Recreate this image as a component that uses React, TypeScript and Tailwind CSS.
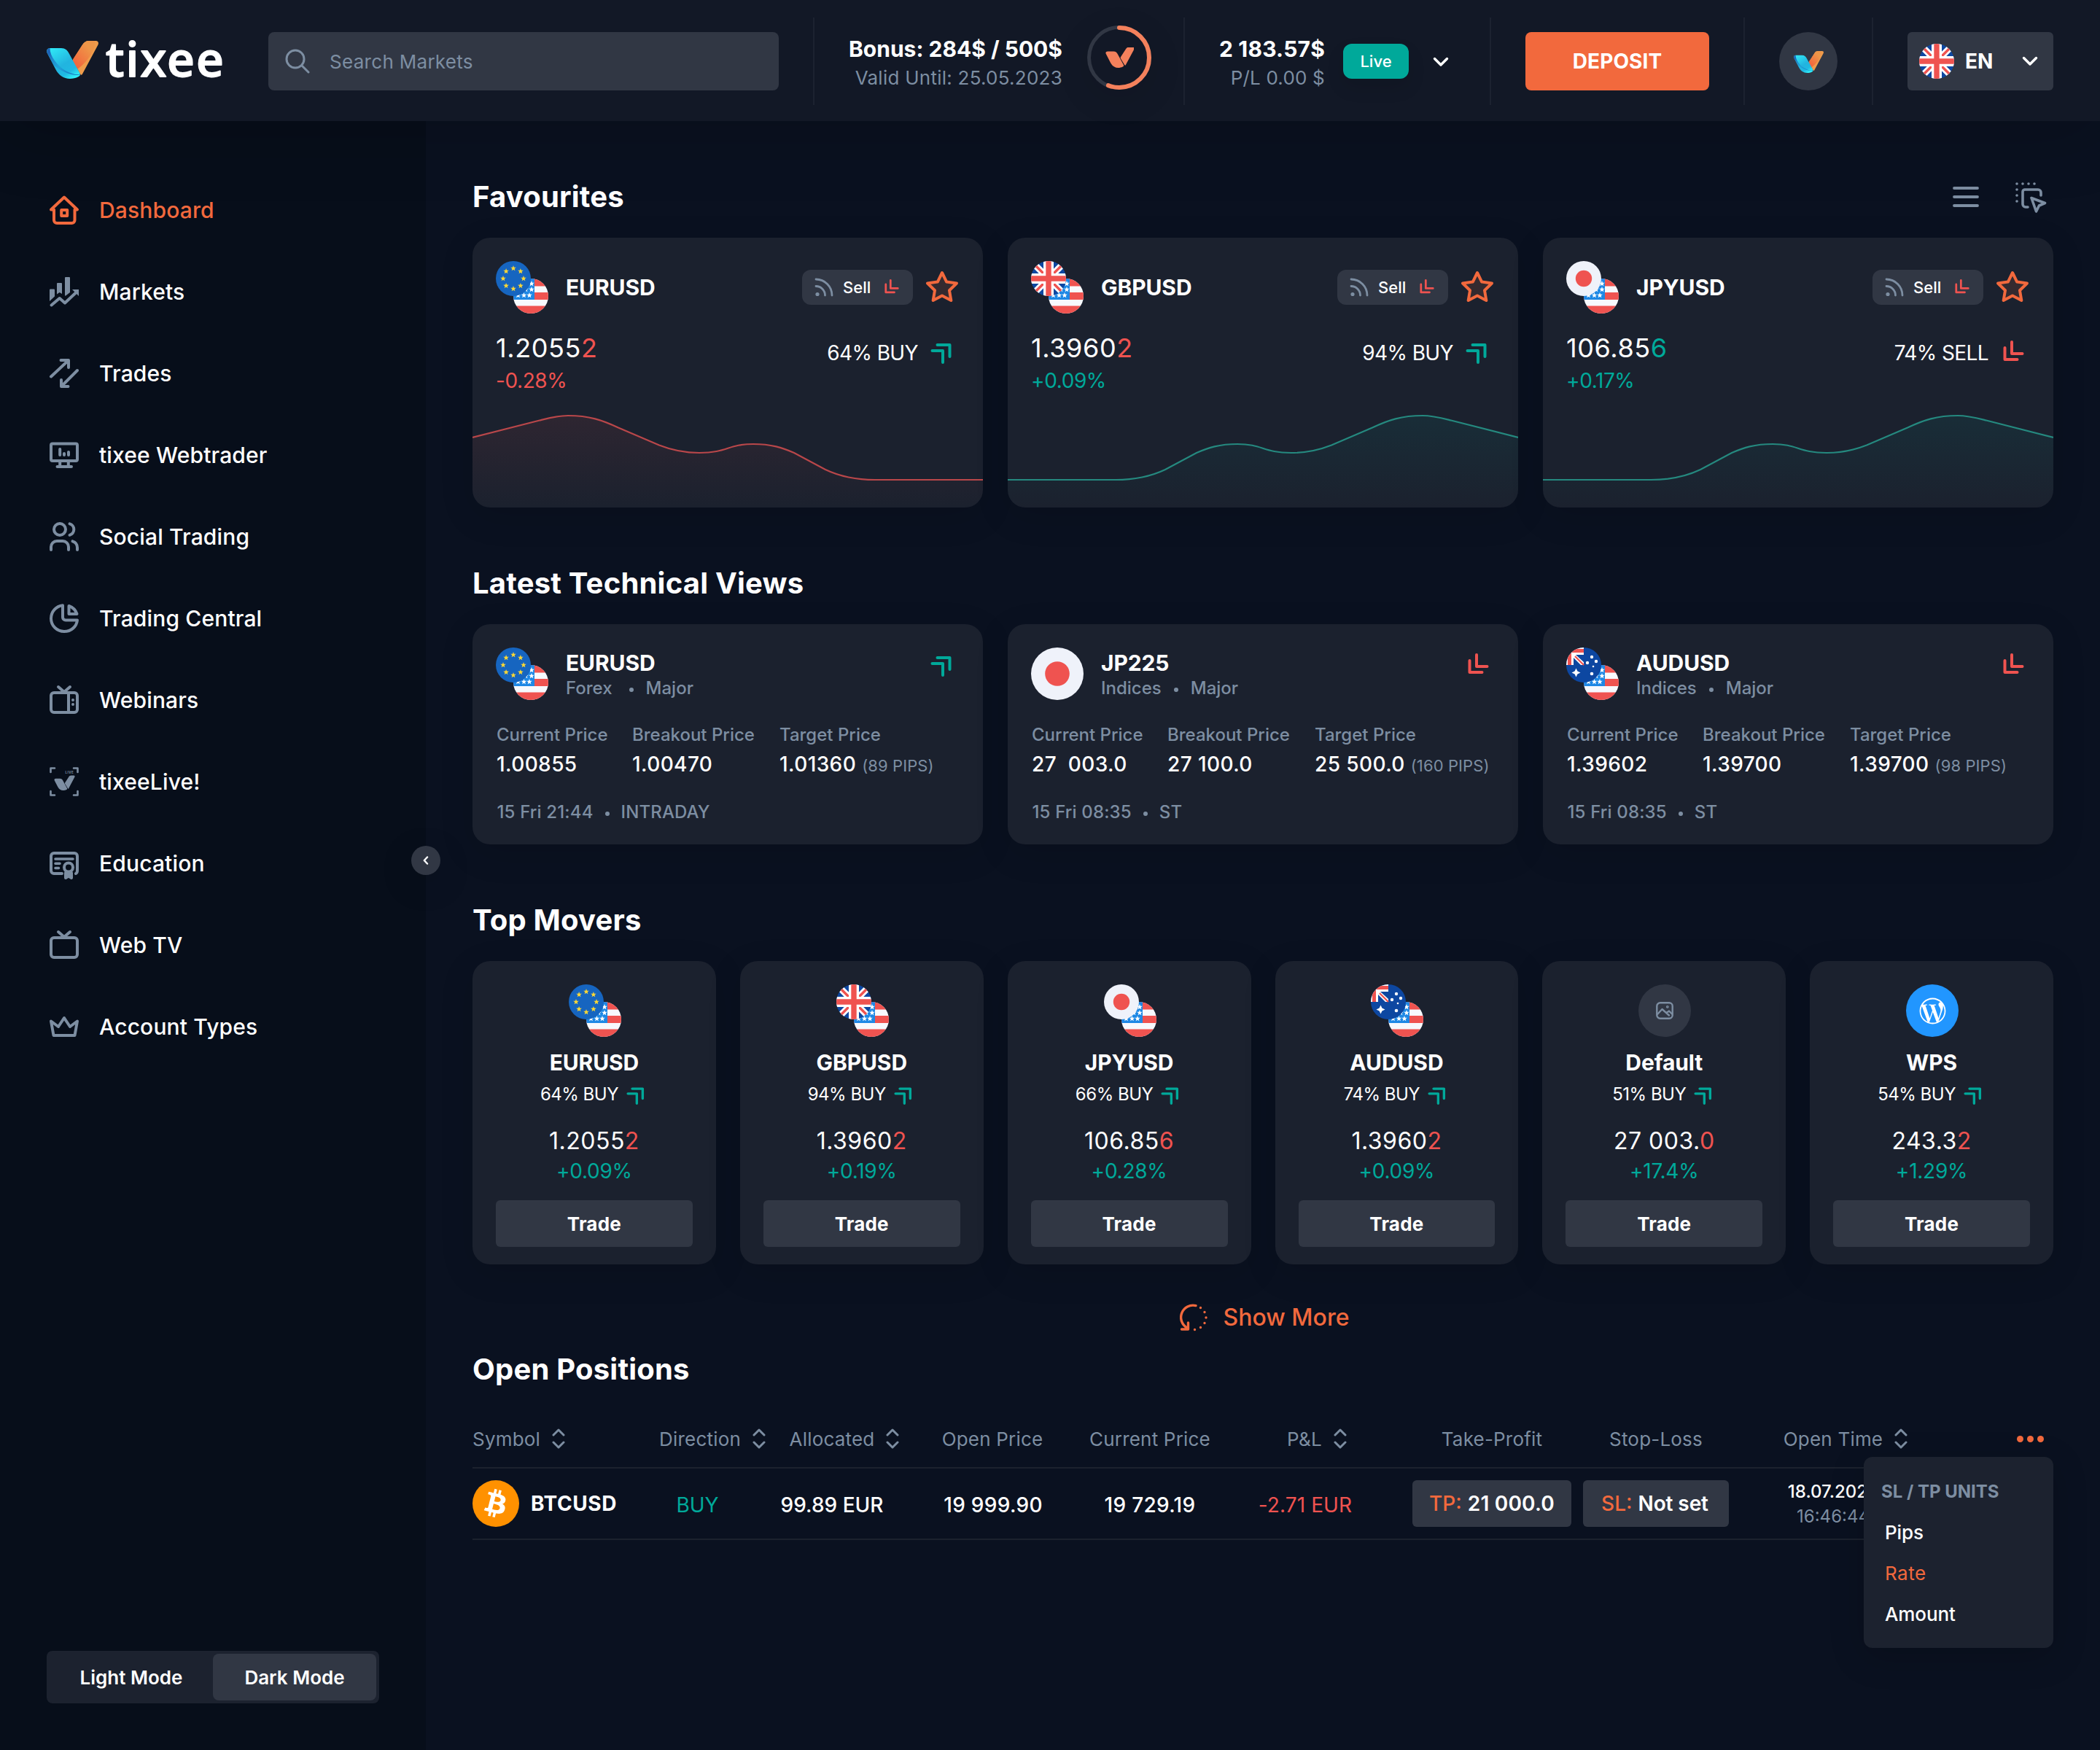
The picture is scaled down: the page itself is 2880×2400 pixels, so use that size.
import React from 'react';
import { FaBitcoin, FaWordpressSimple } from 'react-icons/fa';

/* ---------- flags ---------- */

function starPoints(cx: number, cy: number, r: number, spikes = 5, ratio = 0.42) {
  const pts: string[] = [];
  for (let i = 0; i < spikes * 2; i++) {
    const a = (Math.PI / spikes) * i - Math.PI / 2;
    const rad = i % 2 === 0 ? r : r * ratio;
    pts.push(`${(cx + rad * Math.cos(a)).toFixed(2)},${(cy + rad * Math.sin(a)).toFixed(2)}`);
  }
  return pts.join(' ');
}

type FlagCode = 'eu' | 'us' | 'gb' | 'jp' | 'au';

function FlagArt({ code }: { code: FlagCode }) {
  if (code === 'eu') {
    return (
      <>
        <rect width="48" height="48" fill="#1665C0" />
        {[0, 1, 2, 3, 4, 5, 6, 7].map((i) => (
          <polygon
            key={i}
            points={starPoints(24 + 14 * Math.sin((i * Math.PI) / 4), 24 - 14 * Math.cos((i * Math.PI) / 4), 4)}
            fill="#FDD835"
          />
        ))}
      </>
    );
  }
  if (code === 'us') {
    return (
      <>
        <rect width="48" height="48" fill="#F7F9FD" />
        <rect width="48" height="10.5" fill="#EF5350" />
        <rect y="19" width="48" height="10" fill="#EF5350" />
        <rect y="37.5" width="48" height="10.5" fill="#EF5350" />
        <rect width="29" height="29" fill="#1E88E5" />
        {[
          [25, 7], [17, 7], [9, 7], [25, 15], [17, 15], [9, 15], [22, 23], [14.5, 23], [6.5, 23],
        ].map(([x, y]) => (
          <polygon key={`${x}-${y}`} points={starPoints(x, y, 4)} fill="#fff" />
        ))}
      </>
    );
  }
  if (code === 'gb') {
    return (
      <>
        <rect width="48" height="48" fill="#0D47A1" />
        <path d="M0 0L48 48M48 0L0 48" stroke="#fff" strokeWidth="9" />
        <path d="M0 0L48 48M48 0L0 48" stroke="#EF5350" strokeWidth="3.4" />
        <path d="M24 0V48M0 24H48" stroke="#fff" strokeWidth="14" />
        <path d="M24 0V48M0 24H48" stroke="#EF5350" strokeWidth="7.4" />
      </>
    );
  }
  if (code === 'jp') {
    return (
      <>
        <rect width="48" height="48" fill="#EFF2FA" />
        <circle cx="24" cy="24" r="11.2" fill="#EF5350" />
      </>
    );
  }
  return (
    <>
      <rect width="48" height="48" fill="#0D47A1" />
      <rect width="24" height="24" fill="#fff" />
      <path d="M0 4.5H24M4.500 0V24" stroke="#EF5350" strokeWidth="5" />
      <path d="M13 10H24V20Z M10 14L20 24H10Z" fill="#0D47A1" />
      <path d="M12 12L24 24" stroke="#EF5350" strokeWidth="2.2" />
      <polygon points={starPoints(13.5, 34.5, 6, 4, 0.45)} fill="#fff" />
      <circle cx="35" cy="13" r="2.2" fill="#fff" />
      <circle cx="29" cy="21" r="2.2" fill="#fff" />
      <circle cx="41" cy="19" r="2.2" fill="#fff" />
      <circle cx="37" cy="26" r="1.3" fill="#fff" />
      <circle cx="35" cy="36" r="2.3" fill="#fff" />
    </>
  );
}

function Flag({ code, className }: { code: FlagCode; className: string }) {
  return (
    <svg viewBox="0 0 48 48" className={`rounded-full ${className}`}>
      <FlagArt code={code} />
    </svg>
  );
}

function PairFlags({ base }: { base: FlagCode }) {
  return (
    <div className="relative size-[72px] shrink-0">
      <Flag code="us" className="absolute right-0 bottom-0 size-12" />
      <Flag code={base} className="absolute top-0 left-0 size-12" />
    </div>
  );
}

/* ---------- brand mark ---------- */

const LEFT_LEAF =
  'M.4 16C-.8 12 1.6 10 5 10H20C25.500 10 28.500 13 30.500 17L45 43.500C46.500 46.500 46 48 43.500 49.200C40 51 36 52 32 52C23 52 16.500 47 12.500 39.500Z';
const RIGHT_LEAF = 'M49 5.500C51 2 54 0 58 0H67.500C70.800 0 71.800 2.800 70.300 5.800L49 45.500C48 47.300 47 47.300 46 45.500L36.500 30C35.300 28 35.300 26.800 36.400 25Z';

function BrandMark({ id, className }: { id: string; className: string }) {
  return (
    <svg viewBox="0 0 71 52" className={className}>
      <defs>
        <linearGradient id={`${id}-b`} x1="8" y1="10" x2="34" y2="52" gradientUnits="userSpaceOnUse">
          <stop offset="0" stopColor="#2FE6F5" />
          <stop offset="0.55" stopColor="#22B4DF" />
          <stop offset="0.8" stopColor="#1FB9E2" />
          <stop offset="1" stopColor="#2FEDF8" />
        </linearGradient>
        <linearGradient id={`${id}-d`} x1="6" y1="14" x2="40" y2="46" gradientUnits="userSpaceOnUse">
          <stop offset="0" stopColor="#1C63B7" />
          <stop offset="0.5" stopColor="#1F9AD6" stopOpacity="0.6" />
          <stop offset="1" stopColor="#1768B8" />
        </linearGradient>
        <linearGradient id={`${id}-o`} x1="40" y1="30" x2="62" y2="10" gradientUnits="userSpaceOnUse">
          <stop offset="0" stopColor="#F2693D" />
          <stop offset="0.9" stopColor="#EE9648" />
        </linearGradient>
      </defs>
      <path d={RIGHT_LEAF} fill="#EF9C4B" />
      <path d="M49 5.500C51 2 54 0 58 0H66C68 8 60 26 42 39L36.500 30C35.300 28 35.300 26.800 36.400 25Z" fill={`url(#${id}-o)`} />
      <path d={LEFT_LEAF} fill={`url(#${id}-b)`} />
      <path d="M.4 16C-.6 12 2 10 4.500 10C4 20 14 34 26 41C33 45 40 47 46 46C45 42 38 31 34 23L45 43.500C46.500 46.500 46 47 43 47C30 47 18 40 10 34Z" fill={`url(#${id}-d)`} />
    </svg>
  );
}

function MonoMark({ className }: { className: string }) {
  return (
    <svg viewBox="0 0 71 52" className={className} fill="currentColor">
      <path d={LEFT_LEAF} />
      <path d={RIGHT_LEAF} transform="translate(2 -1)" />
    </svg>
  );
}

/* ---------- small icons ---------- */

function TrendIcon({ down = false, className }: { down?: boolean; className: string }) {
  return (
    <svg
      viewBox="0 0 32 32"
      fill="none"
      stroke="currentColor"
      strokeWidth="4"
      strokeLinecap="round"
      strokeLinejoin="round"
      className={`shrink-0 ${down ? 'rotate-180 text-[#EF5350]' : 'text-[#00A99A]'} ${className}`}
    >
      <path d="M9.500 6H26.500V22M2.500 14H17V30" />
    </svg>
  );
}

function ChevronDown() {
  return (
    <svg viewBox="0 0 22 14" className="h-[14px] w-[22px] shrink-0" fill="none" stroke="#fff" strokeWidth="3.4" strokeLinecap="round" strokeLinejoin="round">
      <path d="M2.500 2.500L11 11L19.500 2.500" />
    </svg>
  );
}

function SortIcon() {
  return (
    <svg viewBox="0 0 18 28" className="-mr-[34px] ml-4 h-7 w-[18px] shrink-0" fill="none" stroke="currentColor" strokeWidth="3" strokeLinecap="round" strokeLinejoin="round">
      <path d="M2 9L9 2L16 9M2 19L9 26L16 19" />
    </svg>
  );
}

function StarIcon() {
  return (
    <svg viewBox="0 0 48 48" className="size-12 shrink-0">
      <polygon points={starPoints(24, 25, 21, 5, 0.5)} fill="#F2693D" fillOpacity="0.12" stroke="#F2693D" strokeWidth="4" strokeLinejoin="round" />
    </svg>
  );
}

function NavIcon({ name }: { name: string }) {
  const paths: Record<string, React.ReactNode> = {
    Dashboard: (
      <>
        <path d="M2 19.500L20 2.500L38 19.500H34.500V34A4 4 0 0 1 30.500 38H10A4 4 0 0 1 6 34V19.500Z" />
        <rect x="16.200" y="20" width="8" height="8" />
      </>
    ),
    Markets: (
      <g fill="currentColor" stroke="none">
        <path d="M0 17.500Q0 16.500 1 16.500H6Q7 16.500 7 17.500V26.500L0 33Z" />
        <path d="M10 9Q10 8 11 8H16Q17 8 17 9V23L13.700 21L10 23.500Z" />
        <path d="M21 1Q21 0 22 0H27Q28 0 28 1V21L21.500 26Q21 25 21 24Z" />
        <path d="M2.500 38.500L13.700 29L21 35.500L36.500 21" fill="none" stroke="currentColor" strokeWidth="4" />
        <path d="M31 17H40V26Z" />
      </g>
    ),
    Trades: <path d="M2 24.500L25 3M15.500 2H26V12M38 16L16.500 37.500M16 29V38H25.500" />,
    'tixee Webtrader': (
      <>
        <rect x="2" y="4.500" width="36" height="23.500" rx="2" />
        <path d="M14.200 29V35M25.800 29V35M10.500 36H30" />
        <path d="M14.200 12V20M20 18V20M26 16V20" />
      </>
    ),
    'Social Trading': (
      <>
        <circle cx="14" cy="10" r="8" />
        <path d="M2 38V34A8 8 0 0 1 10 26H18A8 8 0 0 1 26 34V38M27.500 2.400A8 8 0 0 1 27.500 17.800M31.500 26.400Q38 28.500 38 35V38" />
      </>
    ),
    'Trading Central': (
      <path d="M18 2.200C8.800 3.200 2 11 2 20.200C2 30 10 38 20 38C29.500 38 37 31.500 38 22.500H22A4 4 0 0 1 18 18.500ZM26.500 3C31.500 4.800 35.800 9 37.500 14H26.500Z" />
    ),
    Webinars: (
      <>
        <rect x="2" y="10" width="36" height="27" rx="4" />
        <path d="M12 2L20 9L28 2M26 10V37" />
        <path d="M32 20V20.010M32 26V26.010" />
      </>
    ),
    'tixeeLive!': (
      <>
        <path d="M7 1.500H1.500V7M33 1.500H38.500V7M7 38.500H1.500V33M33 38.500H38.500V33" strokeWidth="2.6" />
        <g transform="translate(6.500 12) scale(.385)" fill="currentColor" stroke="none">
          <path d={LEFT_LEAF} />
          <path d={RIGHT_LEAF} transform="translate(2 -1)" />
        </g>
        <text x="21.500" y="8.600" fontSize="4.400" fontWeight="700" letterSpacing="0.5" fill="currentColor" stroke="none">
          LIVE
        </text>
      </>
    ),
    Education: (
      <>
        <path d="M17 34H6A4 4 0 0 1 2 30V10A4 4 0 0 1 6 6H34A4 4 0 0 1 38 10V30Q38 33 36 34" />
        <path d="M8 14H32M8 20.300H14M8 26.500H12.500" strokeWidth="3.6" />
        <circle cx="26" cy="25.500" r="6" />
        <path d="M22 33V40L26 37.500L30 40V33M22 34.500H30" />
      </>
    ),
    'Web TV': (
      <>
        <rect x="2" y="10" width="36" height="27" rx="4" />
        <path d="M12 2L20 9L28 2" />
      </>
    ),
    'Account Types': <path d="M2 12.500L12 20L20 8L28 20L38 12.500L34.500 32H5.500Z" />,
  };
  return (
    <svg viewBox="0 0 40 40" className="size-10 shrink-0 overflow-visible" fill="none" stroke="currentColor" strokeWidth="4" strokeLinecap="round" strokeLinejoin="round">
      {paths[name]}
    </svg>
  );
}

/* ---------- header ---------- */

function Header() {
  return (
    <header className="relative z-20 flex h-[166px] shrink-0 items-start bg-[#121826] pt-6 pr-16 pl-16 shadow-[0_12px_100px_rgba(0,0,0,0.18)]">
      <div className="mt-8 flex w-[304px] shrink-0 items-start">
        <BrandMark id="logo" className="h-[52px] w-[71px]" />
        <svg viewBox="0 0 170 60" className="-mt-1 ml-2 h-[60px] w-[170px] overflow-visible">
          <text x="2" y="52.500" fill="#fff" stroke="#fff" strokeWidth="1.800" strokeLinejoin="round" textLength="162" className="font-['Noto_Sans'] text-[66px] font-medium">
            tixee
          </text>
        </svg>
      </div>
      <div className="mt-5 flex h-20 w-[700px] shrink-0 items-center rounded-lg bg-[#313744] pl-[23px]">
        <svg viewBox="0 0 34 34" className="size-[34px]" fill="none" stroke="#7D8EA2" strokeWidth="3" strokeLinecap="round">
          <circle cx="14" cy="14" r="12" />
          <path d="M23 23L32 32" />
        </svg>
        <span className="ml-[27px] text-[26px] tracking-[0.3px] text-[#7D8EA2]">Search Markets</span>
      </div>

      <div className="ml-[47px] flex h-[120px] w-[508px] shrink-0 items-start justify-end border-l-2 border-[#1C2230] pr-[44px]">
        <div className="mt-[23px] text-right leading-10 whitespace-nowrap">
          <div className="text-[30px] font-bold text-white">Bonus: 284$ / 500$</div>
          <div className="text-[26px] tracking-[0.25px] text-[#7D8EA2]">Valid Until: 25.05.2023</div>
        </div>
        <div className="mt-[11px] ml-[34px] grid size-[88px] place-items-center rounded-full shadow-[0_12px_48px_rgba(0,0,0,0.1)]">
          <svg viewBox="0 0 88 88" className="col-start-1 row-start-1 size-[88px]" fill="none">
            <circle cx="44" cy="44" r="41.500" stroke="#313744" strokeWidth="5" />
            <circle cx="44" cy="44" r="41" stroke="#F4815C" strokeWidth="6" pathLength="100" strokeDasharray="56 100" strokeLinecap="round" transform="rotate(-90 44 44)" />
          </svg>
          <MonoMark className="col-start-1 row-start-1 h-7 w-[39px] text-[#F4815C]" />
        </div>
      </div>

      <div className="flex h-[120px] w-[420px] shrink-0 items-start border-l-2 border-[#1C2230]">
        <div className="mt-[23px] w-[192px] text-right leading-10 whitespace-nowrap">
          <div className="text-[30px] font-bold tracking-[0.2px] text-white">2 183.57$</div>
          <div className="text-[26px] tracking-[0.2px] text-[#7D8EA2]">P/L 0.00 $</div>
        </div>
        <div className="mt-9 ml-[25px] flex h-12 w-[90px] items-center justify-center rounded-xl bg-[#00A99A] text-[22px] font-medium text-white shadow-[0_12px_24px_rgba(0,0,0,0.1)]">
          Live
        </div>
        <div className="mt-[54px] ml-[33px]">
          <ChevronDown />
        </div>
      </div>

      <div className="flex h-[120px] w-[348px] shrink-0 items-start border-l-2 border-[#1C2230] pl-[47px]">
        <button className="mt-5 h-20 w-[252px] rounded-lg bg-[#F2693D] text-[28px] font-bold tracking-[0.1px] text-white">DEPOSIT</button>
      </div>
      <div className="flex h-[120px] w-[176px] shrink-0 items-start border-l-2 border-[#1C2230] pl-[47px]">
        <div className="mt-5 flex size-20 items-center justify-center rounded-full bg-[#313744]">
          <BrandMark id="avatar" className="mt-0.5 h-[30px] w-[41px]" />
        </div>
      </div>
      <div className="flex h-[120px] shrink-0 items-start border-l-2 border-[#1C2230] pl-[47px]">
        <div className="mt-5 flex h-20 w-[200px] items-center rounded-md bg-[#313744] pl-4">
          <Flag code="gb" className="size-12" />
          <span className="ml-[15px] w-[61px] text-[28px] font-bold text-white">EN</span>
          <div className="ml-[17px]">
            <ChevronDown />
          </div>
        </div>
      </div>
    </header>
  );
}

/* ---------- sidebar ---------- */

const NAV = [
  'Dashboard', 'Markets', 'Trades', 'tixee Webtrader', 'Social Trading', 'Trading Central',
  'Webinars', 'tixeeLive!', 'Education', 'Web TV', 'Account Types',
];

function Sidebar() {
  return (
    <aside className="relative z-10 flex w-[584px] shrink-0 flex-col justify-between bg-[#070E1A] pt-[66px] pb-16">
      <nav className="flex flex-col">
        {NAV.map((item, i) => (
          <a key={item} className={`flex h-28 items-center gap-7 pl-[68px] ${i === 0 ? 'text-[#F2693D]' : 'text-[#7D8EA2]'}`}>
            <NavIcon name={item} />
            <span className={`text-[30px] font-medium tracking-[0.15px] ${i === 0 ? 'text-[#F2693D]' : 'text-white'}`}>{item}</span>
          </a>
        ))}
      </nav>
      <div className="ml-16 grid h-[72px] w-[456px] grid-cols-2 rounded-lg bg-[#1C222F] p-1 text-[26px] font-semibold text-white">
        <span className="flex items-center justify-center">Light Mode</span>
        <span className="flex items-center justify-center rounded-lg bg-[#313744]">Dark Mode</span>
      </div>
      <button className="absolute top-[994px] -right-5 flex size-10 items-center justify-center rounded-full bg-[#313744] shadow-[0_12px_48px_rgba(0,0,0,0.15)]">
        <svg viewBox="0 0 8 12" className="h-3 w-2" fill="none" stroke="#fff" strokeWidth="2.400" strokeLinecap="round" strokeLinejoin="round">
          <path d="M6 1.500L1.800 6L6 10.500" />
        </svg>
      </button>
    </aside>
  );
}

/* ---------- favourites ---------- */

const CARD = 'rounded-3xl bg-[#1B212E] shadow-[0_12px_48px_rgba(0,0,0,0.12)]';
const CURVE = 'M0 32L92 8.500C106 5 117 2 131 2C160 2 178 8 200 18.500L256 42.500C275 50 290 53 311 53C350 53 350 41 385 41C410 41 425 46 441 53L484 76C505 86 525 90 552 90H700';

function Chart({ up }: { up: boolean }) {
  const color = up ? '#00A99A' : '#EF5350';
  const id = up ? 'area-up' : 'area-down';
  return (
    <svg viewBox="0 0 700 128" className={`mt-auto h-32 w-full ${up ? '-scale-x-100' : ''}`} fill="none">
      <defs>
        <linearGradient id={id} x1="0" y1="0" x2="0" y2="1">
          <stop offset="0" stopColor={color} stopOpacity="0.09" />
          <stop offset="1" stopColor={color} stopOpacity="0" />
        </linearGradient>
      </defs>
      <path d={`${CURVE}V128H0Z`} fill={`url(#${id})`} />
      <path d={CURVE} stroke={up ? '#25897F' : '#B9474A'} strokeWidth="2.200" />
    </svg>
  );
}

const FAVOURITES = [
  { base: 'eu', name: 'EURUSD', price: '1.2055', last: '2', lastUp: false, pct: '-0.28%', mood: '64% BUY', sell: false, up: false },
  { base: 'gb', name: 'GBPUSD', price: '1.3960', last: '2', lastUp: false, pct: '+0.09%', mood: '94% BUY', sell: false, up: true },
  { base: 'jp', name: 'JPYUSD', price: '106.85', last: '6', lastUp: true, pct: '+0.17%', mood: '74% SELL', sell: true, up: true },
] as const;

function Favourites() {
  return (
    <section>
      <div className="flex h-12 items-center justify-between pr-2">
        <Title>Favourites</Title>
        <div className="flex items-center gap-[48px] text-[#7D8EA2]">
          <svg viewBox="0 0 40 28" className="h-7 w-10" stroke="currentColor" strokeWidth="3.800" strokeLinecap="round">
            <path d="M4 2H36M4 14H36M4 26H36" />
          </svg>
          <svg viewBox="0 0 44 42" className="mt-0.5 h-[42px] w-11" fill="none" stroke="currentColor" strokeWidth="3.600" strokeLinecap="round" strokeLinejoin="round">
            <path d="M2 2V2.010M10 2V2.010M18 2V2.010M26 2V2.010M2 10V10.010M2 18V18.010M2 26V26.010" />
            <path d="M17 34H14A4 4 0 0 1 10 30V13A3 3 0 0 1 13 10H31A4 4 0 0 1 35 14V18M22 21.500L40.500 28.500L32.500 32L28.500 40Z" />
          </svg>
        </div>
      </div>
      <div className="mt-8 grid grid-cols-3 gap-[34px]">
        {FAVOURITES.map((f) => (
          <article key={f.name} className={`flex h-[370px] flex-col overflow-hidden pt-8 ${CARD}`}>
            <div className="flex items-center px-8">
              <PairFlags base={f.base} />
              <span className="ml-6 text-[30px] font-bold tracking-[-0.1px] text-white">{f.name}</span>
              <div className="mr-4 ml-auto flex h-12 w-[152px] items-center rounded-xl bg-[#313744] pl-[17px]">
                <svg viewBox="0 0 26 26" className="size-[26px]" fill="none" stroke="#7D8EA2" strokeWidth="2.800" strokeLinecap="round">
                  <path d="M2 2A22 22 0 0 1 24 24M2 11.500A12.500 12.500 0 0 1 14.500 24" />
                  <circle cx="4" cy="22.500" r="2.600" fill="#7D8EA2" stroke="none" />
                </svg>
                <span className="ml-[13px] text-[22px] font-medium text-white">Sell</span>
                <TrendIcon down className="ml-[17px] size-[22px]" />
              </div>
              <StarIcon />
            </div>
            <div className="mt-[25px] flex justify-between pr-10 pl-8">
              <div>
                <div className="text-[36px] leading-[44px] tracking-[0.6px] text-white">
                  {f.price}
                  <span className={f.lastUp ? 'text-[#00A99A]' : 'text-[#EF5350]'}>{f.last}</span>
                </div>
                <div className={`text-[28px] leading-[46px] tracking-[-0.4px] ${f.up ? 'text-[#00A99A]' : 'text-[#EF5350]'}`}>{f.pct}</div>
              </div>
              <div className="mt-3 flex h-8 items-center gap-[17px]">
                <span className="pt-0.5 text-[28px] tracking-[-0.6px] text-white">{f.mood}</span>
                <TrendIcon down={f.sell} className="size-8" />
              </div>
            </div>
            <Chart up={f.up} />
          </article>
        ))}
      </div>
    </section>
  );
}

function Title({ children }: { children: React.ReactNode }) {
  return <h2 className="text-[40px] leading-[48px] font-bold tracking-[0.2px] text-white">{children}</h2>;
}

/* ---------- technical views ---------- */

const VIEWS = [
  { flag: 'eu', single: false, name: 'EURUSD', kind: 'Forex', down: false, cur: '1.00855', brk: '1.00470', tgt: '1.01360', pips: '(89 PIPS)', time: '15 Fri 21:44', term: 'INTRADAY' },
  { flag: 'jp', single: true, name: 'JP225', kind: 'Indices', down: true, cur: '27  003.0', brk: '27 100.0', tgt: '25 500.0', pips: '(160 PIPS)', time: '15 Fri 08:35', term: 'ST' },
  { flag: 'au', single: false, name: 'AUDUSD', kind: 'Indices', down: true, cur: '1.39602', brk: '1.39700', tgt: '1.39700', pips: '(98 PIPS)', time: '15 Fri 08:35', term: 'ST' },
] as const;

function Dot() {
  return <span className="mt-1 size-[6px] shrink-0 rounded-full bg-[#7D8EA2]" />;
}

function TechnicalViews() {
  return (
    <section className="mt-20">
      <Title>Latest Technical Views</Title>
      <div className="mt-8 grid grid-cols-3 gap-[34px]">
        {VIEWS.map((v) => (
          <article key={v.name} className={`h-[302px] pt-8 pl-8 text-[24px] font-medium text-[#7D8EA2] ${CARD}`}>
            <div className="flex h-[72px] items-start pr-10">
              {v.single ? <Flag code={v.flag} className="size-[72px]" /> : <PairFlags base={v.flag} />}
              <div className="mt-[3px] ml-6">
                <div className="text-[30px] leading-9 font-bold tracking-[-0.1px] text-white">{v.name}</div>
                <div className="flex items-center gap-[17px] pt-px leading-8">
                  <span className={v.kind === 'Forex' ? 'mr-1.5' : ''}>{v.kind}</span>
                  <Dot />
                  <span>Major</span>
                </div>
              </div>
              <TrendIcon down={v.down} className="mt-2 ml-auto size-8" />
            </div>
            <div className="mt-8 ml-px grid grid-cols-[186px_202px_1fr] leading-8">
              <span>Current Price</span>
              <span>Breakout Price</span>
              <span>Target Price</span>
            </div>
            <div className="ml-px grid grid-cols-[186px_202px_1fr] leading-[48px] tracking-[0.4px] whitespace-pre text-white">
              <span className="text-[28px]">{v.cur}</span>
              <span className="text-[28px]">{v.brk}</span>
              <span className="text-[28px]">
                {v.tgt}
                <span className="ml-2 text-[22px] font-normal tracking-[0.1px] text-[#7D8EA2]">{v.pips}</span>
              </span>
            </div>
            <div className="mt-6 flex items-center gap-4 pl-[1.5px] leading-8">
              <span className="tracking-[0.15px]">{v.time}</span>
              <Dot />
              <span className="tracking-[0.1px]">{v.term}</span>
            </div>
          </article>
        ))}
      </div>
    </section>
  );
}

/* ---------- top movers ---------- */

const MOVERS = [
  { icon: 'eu', name: 'EURUSD', mood: '64% BUY', price: '1.2055', last: '2', pct: '+0.09%' },
  { icon: 'gb', name: 'GBPUSD', mood: '94% BUY', price: '1.3960', last: '2', pct: '+0.19%' },
  { icon: 'jp', name: 'JPYUSD', mood: '66% BUY', price: '106.85', last: '6', pct: '+0.28%' },
  { icon: 'au', name: 'AUDUSD', mood: '74% BUY', price: '1.3960', last: '2', pct: '+0.09%' },
  { icon: 'default', name: 'Default', mood: '51% BUY', price: '27 003.', last: '0', pct: '+17.4%' },
  { icon: 'wps', name: 'WPS', mood: '54% BUY', price: '243.3', last: '2', pct: '+1.29%' },
];

function MoverIcon({ icon }: { icon: string }) {
  if (icon === 'default') {
    return (
      <div className="flex size-[72px] items-center justify-center rounded-full bg-[#313744]">
        <svg viewBox="0 0 24 24" className="size-6" fill="none" stroke="#7D8EA2" strokeWidth="2.400" strokeLinejoin="round" strokeLinecap="round">
          <rect x="1.300" y="1.300" width="21.400" height="21.400" rx="4.500" />
          <path d="M2 17L8.500 10L18 18.500M14.500 15L18 12.500L22 16.500" />
          <circle cx="15.800" cy="6.800" r="0.700" />
        </svg>
      </div>
    );
  }
  if (icon === 'wps') {
    return (
      <div className="flex size-[72px] items-center justify-center rounded-full bg-[#2196FF]">
        <FaWordpressSimple className="size-[37px] text-white" />
      </div>
    );
  }
  return <PairFlags base={icon as FlagCode} />;
}

function TopMovers() {
  return (
    <section className="mt-20">
      <Title>Top Movers</Title>
      <div className="mt-8 grid grid-cols-6 gap-[33px]">
        {MOVERS.map((m) => (
          <article key={m.name} className={`flex h-[416px] flex-col items-center px-8 pt-8 ${CARD}`}>
            <div className="pl-0.5">
              <MoverIcon icon={m.icon} />
            </div>
            <div className="mt-[15px] text-[30px] leading-10 font-bold tracking-[-0.1px] text-white">{m.name}</div>
            <div className="mt-1 mr-[3px] flex h-10 items-center gap-[11px]">
              <span className="text-[24px] tracking-[-0.5px] text-white">{m.mood}</span>
              <TrendIcon className="size-[27px]" />
            </div>
            <div className="mt-[22px] text-[32px] leading-[44px] tracking-[0.5px] whitespace-nowrap text-white">
              {m.price}
              <span className="text-[#EF5350]">{m.last}</span>
            </div>
            <div className="text-[28px] leading-[38px] tracking-[-0.25px] text-[#00A99A]">{m.pct}</div>
            <button className="mt-[21px] h-16 w-full rounded-md bg-[#313744] text-[26px] font-bold tracking-[0.2px] text-white">Trade</button>
          </article>
        ))}
      </div>
      <button className="mt-[49px] flex h-12 w-full items-center justify-center gap-[22px] pl-1 text-[#F2693D]">
        <svg viewBox="0 0 38 38" className="size-[38px]" fill="none" stroke="currentColor" strokeWidth="3.400" strokeLinecap="round" strokeLinejoin="round">
          <path d="M22 2.600A16.500 16.500 0 0 0 10 33M2.500 35H11.500V26" />
          <path d="M28.500 5.500V5.510M34 11.500V11.510M36 19V19.010M34 26.500V26.510M28.500 32.500V32.510M20.500 35.500V35.510" />
        </svg>
        <span className="text-[32px] font-medium">Show More</span>
      </button>
    </section>
  );
}

/* ---------- open positions ---------- */

const COLS = 'grid grid-cols-[222px_180px_182px_258px_174px_250px_264px_186px_300px_152px] items-center';

const HEADS = [
  { label: 'Direction', sort: true },
  { label: 'Allocated', sort: true },
  { label: 'Open Price', sort: false },
  { label: 'Current Price', sort: false },
  { label: 'P&L', sort: true },
  { label: 'Take-Profit', sort: false },
  { label: 'Stop-Loss', sort: false },
  { label: 'Open Time', sort: true },
];

function OpenPositions() {
  return (
    <section className="mt-[23px]">
      <Title>Open Positions</Title>
      <div className="relative mt-8">
        <div className={`h-20 border-b-2 border-[#1C222E] text-[26px] tracking-[0.2px] whitespace-nowrap text-[#7D8EA2] ${COLS}`}>
          <span className="flex items-center">
            Symbol
            <SortIcon />
          </span>
          {HEADS.map((h) => (
            <span key={h.label} className="flex items-center justify-center">
              {h.label}
              {h.sort && <SortIcon />}
            </span>
          ))}
          <span className="flex justify-end gap-[5px] pr-[13px]">
            <i className="size-[9px] rounded-full bg-[#F2693D]" />
            <i className="size-[9px] rounded-full bg-[#F2693D]" />
            <i className="size-[9px] rounded-full bg-[#F2693D]" />
          </span>
        </div>
        <div className={`h-[98px] border-b-2 border-[#1C222E] text-[28px] font-medium whitespace-nowrap text-white ${COLS}`}>
          <span className="flex items-center">
            <span className="size-16 rounded-full bg-[radial-gradient(circle,#fff_60%,#FF9100_62%)]">
              <FaBitcoin className="size-16 text-[#FF9100]" />
            </span>
            <span className="ml-4 text-[28px] font-bold tracking-[0.6px]">BTCUSD</span>
          </span>
          <span className="pt-[3px] pr-[7px] text-center font-normal text-[#00A99A]">BUY</span>
          <span className="pt-[3px] text-center">99.89 EUR</span>
          <span className="pt-[3px] pl-0.5 text-center tracking-[0.3px]">19 999.90</span>
          <span className="pt-[3px] text-center tracking-[0.3px]">19 729.19</span>
          <span className="pt-[3px] pl-0.5 text-center font-normal tracking-[0.1px] text-[#EF5350]">-2.71 EUR</span>
          <span className="flex justify-center font-semibold">
            <span className="flex h-16 w-[218px] items-center justify-center gap-2 rounded-md bg-[#313744]">
              <span className="font-medium text-[#F2693D]">TP:</span>
              <span className="tracking-[0.2px]">21 000.0</span>
            </span>
          </span>
          <span className="flex justify-center font-semibold">
            <span className="flex h-16 w-[200px] shrink-0 items-center justify-center gap-2 rounded-md bg-[#313744] pr-[3px]">
              <span className="font-medium text-[#F2693D]">SL:</span>
              <span className="tracking-[-0.1px]">Not set</span>
            </span>
          </span>
          <span className="pt-0.5 text-center text-[24px] leading-[34px]">
            <span className="block">18.07.2023</span>
            <span className="block font-normal text-[#7D8EA2]">16:46:44</span>
          </span>
        </div>
        <div className="absolute top-16 right-0 flex h-[262px] w-[260px] flex-col rounded-xl bg-[#1C222F] pt-7 pl-6 shadow-[0_12px_48px_rgba(0,0,0,0.18)]">
          <span className="text-[24px] leading-10 font-bold text-[#7D8EA2]">SL / TP UNITS</span>
          <div className="mt-2 flex flex-col pl-[5px] text-[26px] leading-[56px] font-medium tracking-[-0.1px] text-white">
            <span>Pips</span>
            <span className="font-normal tracking-[0.5px] text-[#F2693D]">Rate</span>
            <span>Amount</span>
          </div>
        </div>
      </div>
    </section>
  );
}

export default function App() {
  return (
    <div className="flex h-[2400px] w-[2880px] flex-col overflow-hidden bg-[#0A1120] font-['Inter',sans-serif]">
      <Header />
      <div className="flex grow">
        <Sidebar />
        <main className="flex w-[2296px] flex-col px-16 pt-20">
          <Favourites />
          <TechnicalViews />
          <TopMovers />
          <OpenPositions />
        </main>
      </div>
    </div>
  );
}
